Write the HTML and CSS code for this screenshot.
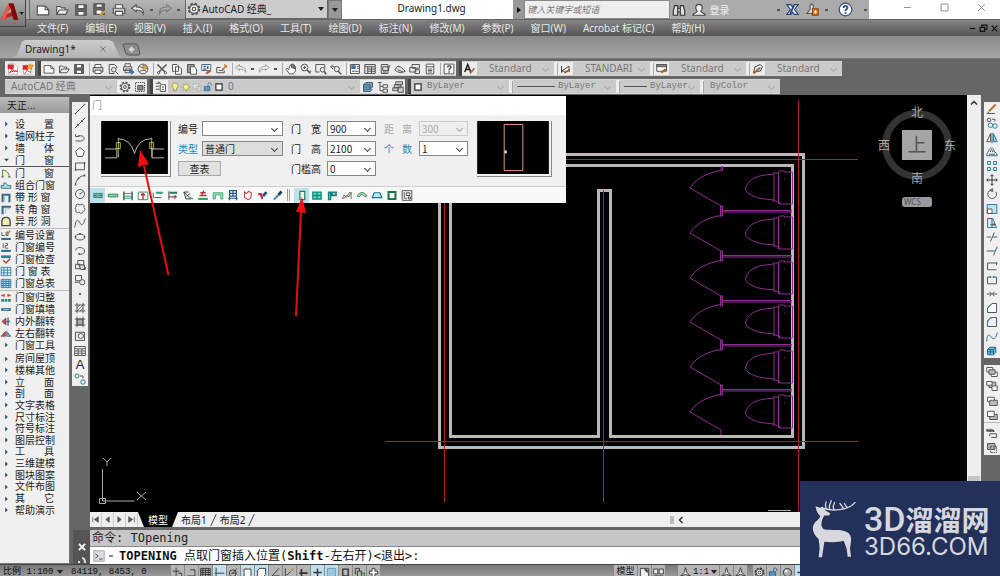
FILE: index.html
```html
<!DOCTYPE html>
<html lang="zh-CN">
<head>
<meta charset="utf-8">
<meta name="viewport" content="width=device-width, initial-scale=1">
<title>Drawing1.dwg</title>
<link rel="stylesheet" href="styles.css">
</head>
<body>
<svg class="sprite" aria-hidden="true">
<symbol id="new" viewBox="0 0 16 16"><path fill="#fff" d="M1.500 3.500h9l4 4v6h-13z"/><path d="M10.500 3.500v4h4"/></symbol>
<symbol id="open" viewBox="0 0 16 16"><path fill="#eee" d="M2 13V4h4l1.500 1.500h4V8M2 13l3-5h10l-3 5z"/></symbol>
<symbol id="save" viewBox="0 0 16 16"><path fill="#666" d="M2 2h12v12H2z"/><path fill="#fff" d="M4.500 2h7v4.500h-7zM4.500 9.500h7V14h-7z"/></symbol>
<symbol id="saveas" viewBox="0 0 16 16"><path fill="#666" d="M1 1h12v12H1z"/><path fill="#fff" d="M3.500 1h7v4h-7zM3.500 8h7v5h-7z"/><path stroke="#c79a2a" stroke-width="2.500" d="M8 14l6-5"/></symbol>
<symbol id="print" viewBox="0 0 16 16"><path fill="#fff" d="M4 6V2h8v4"/><path fill="#ccc" d="M1.500 6h13v6h-13z"/><path fill="#fff" d="M4 9.500h8V14H4z"/></symbol>
<symbol id="preview" viewBox="0 0 16 16"><path d="M10 14H3V2h7l3 3v2"/><circle cx="9" cy="9" r="3"/><path d="M11 11l4 4"/></symbol>
<symbol id="publish" viewBox="0 0 16 16"><path d="M4 5V1h7v4M2 5h11v5H2zM4 8h8v5H4z"/><path fill="#3f79ad" stroke="#3f79ad" d="M10 11h3V9l3 3-3 3v-2h-3z"/></symbol>
<symbol id="globe" viewBox="0 0 16 16"><circle cx="8" cy="8" r="6.500" fill="#eee"/><path d="M3 4c3 3 7 3 10 0M3 12c2-3 8-3 10 0"/><path fill="#e3b75c" stroke="#a87d2c" d="M8 8V3c4 0 5 3 5 5z"/></symbol>
<symbol id="undo" viewBox="0 0 16 16"><path fill="#eee" d="M1 6l5-4v2.500c6 0 9 3 8 8-1-3-3.500-4.500-8-4.500V10z"/></symbol>
<symbol id="redo" viewBox="0 0 16 16"><path d="M15 6l-5-4v2.500c-6 0-9 3-8 8 1-3 3.500-4.500 8-4.500V10z"/></symbol>
<symbol id="cut" viewBox="0 0 16 16"><path stroke-width="2" d="M2 2l10 10M14 2L4 12"/><circle cx="3.500" cy="13" r="1.500"/><circle cx="12.500" cy="13" r="1.500"/></symbol>
<symbol id="copy" viewBox="0 0 16 16"><path fill="#fff" d="M2 2h6l2 2v7H2zM6 5h5l3 3v7H6z"/></symbol>
<symbol id="paste" viewBox="0 0 16 16"><path fill="#999" d="M2 2h9v11H2z"/><path fill="#fff" d="M6 5h5l3 3v7H6z"/></symbol>
<symbol id="match" viewBox="0 0 16 16"><path fill="#fff" stroke="#476787" d="M1 2h12v8H1z"/><path stroke="#476787" stroke-width="2" d="M3 4.500h4M9 4v4M3 8h4"/><path stroke="#ae6b32" stroke-width="3" d="M7 14l6-4"/></symbol>
<symbol id="block" viewBox="0 0 16 16"><path d="M6 6H1v7h10v-3M4 10h5V7"/><path stroke="#c47b23" stroke-width="2" d="M9 9l5-6M11 2l4 4"/></symbol>
<symbol id="hand" viewBox="0 0 16 16"><path fill="#fff" d="M5 9L3 7 1.500 8.500 6 14.500h5.500L14 10V5l-1.500-1V8 3L11 2v5-5.500H9V7 2L7 2.500z"/></symbol>
<symbol id="zoomrt" viewBox="0 0 16 16"><circle cx="6" cy="6" r="4.500"/><path stroke-width="2" d="M9 9l5 5"/><path d="M4 6h4M6 4v4M11 11h4"/></symbol>
<symbol id="zoomwin" viewBox="0 0 16 16"><path d="M6 12H1V2h12v5"/><circle cx="10" cy="9" r="3"/><path stroke-width="2" d="M12 11l3 4"/></symbol>
<symbol id="zoomprev" viewBox="0 0 16 16"><circle cx="9" cy="8" r="3.500"/><path stroke-width="2" d="M11 11l4 4"/><path d="M1 5h6M1 5l3-3M1 5l3 3"/></symbol>
<symbol id="props" viewBox="0 0 16 16"><path fill="#fff" d="M2 2h12v12H2z"/><path fill="#3f719b" stroke="none" d="M3 3h6v5H3z"/><path d="M10.500 4.500h3M10.500 7h3M4 11h9"/></symbol>
<symbol id="dc" viewBox="0 0 16 16"><path fill="#ddd" d="M1 2h14v12H1zM1 5h14M5 5v9M5 8h10M5 11h10M10 5v9"/></symbol>
<symbol id="palette" viewBox="0 0 16 16"><path fill="#ddd" d="M3 2h9v12H3zM5 5h8v5H5z"/><path d="M12 8l3-5M5 12h5"/></symbol>
<symbol id="sheet" viewBox="0 0 16 16"><path fill="#ddd" d="M1 9l4-5 5 2 5 5-5 2-5-1zM5 9l7 3"/></symbol>
<symbol id="markup" viewBox="0 0 16 16"><path d="M4 2h10v5H4zM1 6h8v6H1zM8 9h6v5H8z"/></symbol>
<symbol id="calc" viewBox="0 0 16 16"><path fill="#fff" d="M3 1.500h10v13H3zM3 5h10M5 8h6M5 10h6M5 12h6"/></symbol>
<symbol id="helpbox" viewBox="0 0 16 16"><path fill="#fff" d="M1.500 1.500h13v13h-13z"/><path stroke-width="2" d="M6 6c0-3 4.500-3 4.500-.5C10.500 7.500 8 7 8 9.500M8 11v2"/></symbol>
<symbol id="gear" viewBox="0 0 16 16"><circle cx="8" cy="8" r="6" stroke-width="2.500" stroke-dasharray="2.700 2"/><circle cx="8" cy="8" r="5" fill="#eee"/><circle cx="8" cy="8" r="2"/></symbol>
<symbol id="wsave" viewBox="0 0 16 16"><path stroke-dasharray="2 1" d="M2 2h12v12H2z"/><path fill="#888" d="M5 6h7v6H5z"/></symbol>
<symbol id="layers" viewBox="0 0 16 16"><path fill="#fff" d="M7 5h7v9H7zM1 3h7M1 7h5M1 11h5M9 8h3M9 11h3M4 1l3 2"/></symbol>
<symbol id="bulb" viewBox="0 0 16 16"><path fill="#f7ec8b" stroke="#7d783b" d="M6 11C1 6 4 1.500 8 1.500S15 6 10 11v3H6z"/></symbol>
<symbol id="sun" viewBox="0 0 16 16"><path stroke="#a99647" d="M8 0v16M0 8h16M2 2l12 12M14 2L2 14"/><circle cx="8" cy="8" r="4" fill="#fff7a0" stroke="#a99647"/></symbol>
<symbol id="vp" viewBox="0 0 16 16"><path stroke="#aaa" fill="#ddd" d="M2 3h9v8H2zM7 7h7v7H7z"/></symbol>
<symbol id="lock" viewBox="0 0 16 16"><path fill="#5b93bd" stroke="#34627e" d="M2 7h9v7H2z"/><path stroke="#34627e" d="M8 7V3c0-2 5-2 5 0v3"/></symbol>
<symbol id="box" viewBox="0 0 16 16"><path fill="#fff" stroke="#333" stroke-width="2" d="M3 3h10v10H3z"/></symbol>
<symbol id="stack" viewBox="0 0 16 16"><path fill="#82a9bd" stroke="#355f75" d="M5 2h9v6l-3 3H2V5zM2 5h9v6M2 8h9M2 11v3h9l3-3"/></symbol>
<symbol id="tree" viewBox="0 0 16 16"><path d="M1 2h5M4 2v11h4M4 7h4M8 5h6v4H8zM8 11h6v4H8z"/></symbol>
<symbol id="lstate" viewBox="0 0 16 16"><path fill="#ccc" d="M5 1h9v4H5zM3 5h9v4H3zM1 9h7v4H1zM8 8h7v7H8z"/></symbol>
<symbol id="tstyle" viewBox="0 0 16 16"><path stroke="#222" stroke-width="2" d="M1 12L5 2l4 10M2.500 8.500h5"/><path stroke="#a66d46" stroke-width="2.500" d="M8 14l6-7"/></symbol>
<symbol id="dstyle" viewBox="0 0 16 16"><path stroke="#444" d="M2 4v9M2 11l10-7v8M2 11h4"/><path stroke="#a4522e" stroke-width="2.500" d="M6 13l7-4"/></symbol>
<symbol id="tbstyle" viewBox="0 0 16 16"><path fill="#fff" d="M1 2h13v9H1z"/><path fill="#888" d="M1 2h13v3H1z"/><path stroke="#96683c" stroke-width="3" d="M7 13l6-5"/></symbol>
<symbol id="mstyle" viewBox="0 0 16 16"><path fill="#eee" stroke="#444" d="M2 13l2-8 7-3 3 3-3 6H6z"/><path stroke="#9c6a3d" stroke-width="2.500" d="M2 14l9-8"/></symbol>
<symbol id="pdf" viewBox="0 0 16 16"><path fill="#fff" stroke="#bbb" d="M2 1h8l4 4v10H2z"/><path fill="#d8262c" stroke="none" d="M1 2h8v6H1z"/><path stroke="#d8262c" d="M3 13c4-3 4-6 3-7-1 3 4 6 8 5-4-1-7 0-11 2"/></symbol>
<symbol id="pdfm" viewBox="0 0 16 16"><path fill="#fff" stroke="#bbb" d="M2 3h10v12H2z"/><path fill="#d8262c" stroke="none" d="M1 3h7v6H1z"/><path stroke="#d8262c" d="M3 14c4-2 4-5 3-6 1 3 4 4 6 4"/><path fill="#f3b22b" stroke="#d88b12" d="M11 1l1 2 3 0-2 3 0 3-3-2-3 0 2-3z"/></symbol>
<symbol id="binoc" viewBox="0 0 16 16"><path fill="#ddd" stroke="#333" d="M3 3h3.500v11h-5V9zM13 3H9.500v11h5V9zM6.500 6h3v4h-3z"/></symbol>
<symbol id="person" viewBox="0 0 16 16"><path fill="#eee" stroke="#444" d="M1 14c0-3 5-2.500 5-4.500C3 6 4 1.500 8 1.500S13 6 10 9.500c0 2 5 1.500 5 4.500z"/></symbol>
<symbol id="xchg" viewBox="0 0 16 16"><path fill="#e9f0fa" stroke="#24427d" d="M1 2h5l2 3 2-3h5l-4.500 6L15 14h-5l-2-3-2 3H1l4.500-6z"/><path stroke="#24427d" stroke-width="2" d="M10 3L5 13"/></symbol>
<symbol id="cloud" viewBox="0 0 16 16"><path fill="#ddd" stroke="#555" d="M1 13l4-5V3l2-2 2 2v5l4 5z"/><path fill="#e07d1e" stroke="#8d3b0c" d="M8 7h7v8H8z"/><path stroke="#fff" d="M11.500 9v4M9.500 11h4"/></symbol>
<symbol id="help" viewBox="0 0 16 16"><circle cx="8" cy="8" r="6.700" fill="#fff" stroke="#345083"/><path stroke="#345083" stroke-width="2" d="M6 6.500c0-3 4-3 4-.5C10 8 8 7.500 8 9.500M8 11v1.800"/></symbol>
<symbol id="min" viewBox="0 0 16 16"><path d="M3 8h10"/></symbol>
<symbol id="max" viewBox="0 0 16 16"><path d="M3 3h10v10H3z"/></symbol>
<symbol id="x" viewBox="0 0 16 16"><path d="M3 3l10 10M13 3L3 13"/></symbol>
<symbol id="restore" viewBox="0 0 16 16"><path d="M5 6V2h9v7h-4M2 6h8v7H2z"/></symbol>
<symbol id="plus" viewBox="0 0 20 14"><path fill="#8d8d8d" stroke="#4f4f4f" d="M1 2q0-1 1-1h12q2 0 3 2l2 8q0 2-2 2H7q-2 0-3-2z"/><path stroke="#ddd" stroke-width="2" d="M10 4v6M7 7h6"/></symbol>
<symbol id="line" viewBox="0 0 16 16"><path d="M2 14L14 2"/><path stroke-width="2.500" d="M1.500 14.500l1-1M13.500 2.500l1-1"/></symbol>
<symbol id="xline" viewBox="0 0 16 16"><path d="M1 15L15 1"/><path stroke-width="3" d="M5 11l1-1M10 6l1-1"/></symbol>
<symbol id="pline" viewBox="0 0 16 16"><path d="M2 12h7c6 0 6-7 0-7H5M2 3v3h5"/></symbol>
<symbol id="poly" viewBox="0 0 16 16"><path d="M8 2l6 5-2.500 7h-7L2 7z"/></symbol>
<symbol id="rect" viewBox="0 0 16 16"><path d="M2 4h12v9H2z"/><path stroke-width="2.500" d="M1 13h2M13 4h2"/></symbol>
<symbol id="arc" viewBox="0 0 16 16"><path d="M2 14C3 8 7 3 14 2"/><path stroke-width="2.500" d="M1 14h2M5 6h2M13 2h2"/></symbol>
<symbol id="circle" viewBox="0 0 16 16"><circle cx="8" cy="8" r="6"/><path d="M8 8l4-3M7 8h2"/></symbol>
<symbol id="revcloud" viewBox="0 0 16 16"><path d="M3 5c-2-3 3-5 5-2 3-3 7 0 5 3 3 2 1 5-1 5 0 3-4 4-5 1-3 2-6 0-4-3-2-1-2-3 0-4z"/></symbol>
<symbol id="spline" viewBox="0 0 16 16"><path d="M1 14C3 0 6 4 8 8s4 4 7-6"/></symbol>
<symbol id="ellipse" viewBox="0 0 16 16"><ellipse cx="8" cy="8" rx="6" ry="4"/><path stroke-width="2.500" d="M1 8h2M13 8h2M7 4h2"/></symbol>
<symbol id="earc" viewBox="0 0 16 16"><path d="M2 7c1-5 12-5 12 1 0 4-4 5-7 4"/><path stroke-width="2.500" d="M6 12h2"/></symbol>
<symbol id="insert" viewBox="0 0 16 16"><path d="M5 2h8v6H5zM2 7h6v6H2z"/><path fill="#ddd" d="M7 8h7v6H9z"/><path fill="#333" d="M12 14l3-3v3z"/></symbol>
<symbol id="mkblock" viewBox="0 0 16 16"><path d="M2 2h8v7H2zM1 11h6"/><circle cx="11" cy="11" r="3.500" fill="#eee"/></symbol>
<symbol id="point" viewBox="0 0 16 16"><circle cx="8" cy="8" r="1" fill="#555"/></symbol>
<symbol id="hatch" viewBox="0 0 16 16"><path d="M4 1v14M12 1v14M1 4h14M1 12h14"/><path stroke-width=".8" d="M4 8l4-4M4 12l8-8M8 12l4-4"/></symbol>
<symbol id="grad" viewBox="0 0 16 16"><path fill="#aaa" d="M4 4h8v8H4z"/><path d="M4 1v14M12 1v14M1 4h14M1 12h14"/></symbol>
<symbol id="region" viewBox="0 0 16 16"><path d="M2 3h12v11H2z"/><circle cx="9" cy="8" r="3.500"/></symbol>
<symbol id="table" viewBox="0 0 16 16"><path fill="#fff" d="M1 2h14v12H1zM1 5h14M1 8h14M1 11h14M5.500 5v9M10.500 5v9"/></symbol>
<symbol id="addsel" viewBox="0 0 16 16"><circle cx="4" cy="4" r="2.700" stroke="#3a8340"/><circle cx="12" cy="12" r="3" fill="#dcedf5" stroke="#347495"/><path d="M8 4h4v3"/></symbol>
<symbol id="erase" viewBox="0 0 16 16"><path stroke="#b6793a" stroke-width="3" d="M4 11l9-9"/><path d="M1 14h11M2 12l3 2"/></symbol>
<symbol id="copyo" viewBox="0 0 16 16"><circle cx="4" cy="4" r="2.500"/><g stroke="#2d7fa4"><circle cx="6" cy="11" r="3"/><circle cx="12" cy="12" r="3"/></g><path d="M8 3h4v3"/></symbol>
<symbol id="mirror" viewBox="0 0 16 16"><path d="M6 2v11H1zM8 1v14"/><path fill="#9fc9dc" stroke="#2d7fa4" d="M10 2v11h5z"/></symbol>
<symbol id="offset" viewBox="0 0 16 16"><path stroke="#2d6f91" d="M1 13h14c0-4-3-5-4-5 0-7-7-7-8 0-1 1-2 2-2 5z"/><path d="M4 11h8M6 8c0-4 3-4 3 0"/></symbol>
<symbol id="array" viewBox="0 0 16 16"><g fill="#d9eef7" stroke="#2d7fa4"><path d="M2 2h4v4H2zM10 2h4v4h-4zM2 10h4v4H2zM10 10h4v4h-4z"/></g></symbol>
<symbol id="move" viewBox="0 0 16 16"><path stroke="#333" d="M8 1v14M1 8h14M6 3l2-2 2 2M6 13l2 2 2-2M3 6L1 8l2 2M13 6l2 2-2 2"/></symbol>
<symbol id="rotate" viewBox="0 0 16 16"><path d="M9 2.500A5.800 5.800 0 1 0 13 5M9 1v4l-4-2z"/></symbol>
<symbol id="scale" viewBox="0 0 16 16"><path fill="#c3e1ef" stroke="#2d7fa4" d="M1.500 2h13v12h-13z"/><path fill="#fff" d="M2 8h6v6H2z"/></symbol>
<symbol id="stretch" viewBox="0 0 16 16"><path fill="#d3ecf5" stroke="#2d7fa4" d="M2 2h7l5 12H2z"/><path d="M2 2h6v12M6 10h6M10 8l2 2-2 2"/></symbol>
<symbol id="trim" viewBox="0 0 16 16"><path d="M1 8h4M11 8h4M6 14l5-12" /><path stroke="#2d7fa4" d="M5 8h2M9 8h2"/></symbol>
<symbol id="extend" viewBox="0 0 16 16"><path d="M1 8h8M10 14l5-12"/><path stroke="#2d7fa4" d="M8 8h4"/></symbol>
<symbol id="brkpt" viewBox="0 0 16 16"><path d="M2 13V4h12v3M2 13h12"/><path stroke="#2d7fa4" stroke-width="2.500" d="M13 4h2"/></symbol>
<symbol id="brk" viewBox="0 0 16 16"><path d="M6 4H2v9h12V4h-4"/><path stroke="#2d7fa4" stroke-width="2.500" d="M5 4h2M9 4h2"/></symbol>
<symbol id="join" viewBox="0 0 16 16"><path d="M1 8h14M5 5l2 3-2 3M11 5L9 8l2 3"/></symbol>
<symbol id="chamfer" viewBox="0 0 16 16"><path fill="#f5fafc" d="M2 14V8l6-6h6v12z"/><path stroke="#2d7fa4" d="M2 8l6-6"/></symbol>
<symbol id="fillet" viewBox="0 0 16 16"><path fill="#e7f3f8" d="M2 14v-4c0-5 3-8 8-8h4v12z"/><path stroke="#2d7fa4" d="M2 10c0-5 3-8 8-8"/></symbol>
<symbol id="blend" viewBox="0 0 16 16"><path stroke="#2d6f91" d="M1 14C1 4 4 4 7 8s6 3 8-6"/></symbol>
<symbol id="explode" viewBox="0 0 16 16"><path fill="#6fb4cf" stroke="#22708f" d="M5 3h8v7l-3 3H2V6zM2 6h8v7M10 6l3-3M6 6v7M2 9h8"/></symbol>
<symbol id="front" viewBox="0 0 16 16"><path fill="#fff" d="M1 2h8v6H1zM7 8h8v6H7z"/><path fill="#bbb" d="M4 5h8v6H4z"/></symbol>
<symbol id="back" viewBox="0 0 16 16"><path fill="#bbb" d="M4 3h9v7H4z"/><path fill="#fff" d="M1 2h7v5H1zM8 8h7v6H8z"/></symbol>
<symbol id="above" viewBox="0 0 16 16"><path fill="#fff" d="M2 3h9v6H2z"/><path fill="#bbb" d="M5 7h10v7H5z"/></symbol>
<symbol id="under" viewBox="0 0 16 16"><path fill="#bbb" d="M5 7h10v7H5z"/><path fill="#fff" d="M2 3h9v7H2z"/></symbol>
<symbol id="abc" viewBox="0 0 16 16"><path d="M1 6V3h2v3M5 3v3h2V3zM9 3v3h2M5 9h9v5H7M5 9v3"/><path stroke-width="2" d="M1 5h10"/></symbol>
<symbol id="hback" viewBox="0 0 16 16"><path fill="#aaa" d="M2 2h10v8H2z"/><path stroke-dasharray="2 1" d="M6 6h8v8H6z"/></symbol>
<symbol id="tri" viewBox="0 0 8 8"><path fill="#174f69" stroke="none" d="M2 0l4 4-4 4z"/></symbol>
<symbol id="trid" viewBox="0 0 8 8"><path fill="#174f69" stroke="none" d="M0 2h8L4 6z"/></symbol>
<symbol id="d1" viewBox="0 0 16 16"><path fill="#efeebd" stroke="#487a58" d="M3 13V3c6 0 9 4 10 10"/><path stroke="#305f63" d="M1 13h4M11 13h4"/></symbol>
<symbol id="d2" viewBox="0 0 16 16"><path fill="#b6dde4" stroke="#326878" d="M1 12V8h4V4c3 0 5 2 5 4h5v4z"/></symbol>
<symbol id="d3" viewBox="0 0 16 16"><path stroke="#356b7c" stroke-width="3" d="M3 15V4h10v11"/><path stroke="#9bc" d="M6 5v9"/></symbol>
<symbol id="d4" viewBox="0 0 16 16"><path stroke="#356b7c" stroke-width="3" d="M3 15V4h12"/><path stroke="#9bc" d="M7 14V7h7"/></symbol>
<symbol id="d5" viewBox="0 0 16 16"><path fill="#f3efb4" stroke="#444" stroke-width="2" d="M2 14V8c0-8 12-8 12 0v6z"/></symbol>
<symbol id="d6" viewBox="0 0 16 16"><path d="M2 3v5h4M8 3v5h3V3z"/><path stroke="#a88444" stroke-width="2" d="M9 7l5-6"/><path stroke="#2d6f91" stroke-width="3" d="M1 13h14"/></symbol>
<symbol id="d7" viewBox="0 0 16 16"><path d="M4 2v7M7 2h3v3H7v4h4"/><path stroke="#2d6f91" stroke-width="3" d="M1 13h14"/></symbol>
<symbol id="d8" viewBox="0 0 16 16"><path stroke="#2d7f8f" stroke-width="4" d="M1 4h14"/><path stroke="#c4363b" stroke-width="2" d="M4 9l4 4 6-6"/></symbol>
<symbol id="d9" viewBox="0 0 16 16"><path fill="#e2f2fa" stroke="#2d7fa4" d="M1 2h14v12H1zM1 6h14M1 10h14M5 2v12M10 2v12"/></symbol>
<symbol id="d10" viewBox="0 0 16 16"><path fill="#b9dcec" stroke="#2d7fa4" d="M1 2h14v12H1zM1 5h14M1 8h14M1 11h14M4 2v12M8 2v12M12 2v12"/></symbol>
<symbol id="d11" viewBox="0 0 16 16"><path stroke="#bf4a3f" stroke-width="2" d="M1 5h5M10 5h5M5 3v4M11 3v4"/><path stroke="#37857c" stroke-width="4" stroke-dasharray="4 1" d="M1 12h14"/></symbol>
<symbol id="d12" viewBox="0 0 16 16"><path stroke="#2d6f91" stroke-width="4" d="M1 8h14"/><path stroke="#9ccbe0" d="M4 8h8"/></symbol>
<symbol id="d13" viewBox="0 0 16 16"><path fill="#bc4b55" stroke="#944" d="M2 8l6-5v10z"/><path stroke="#47778c" stroke-width="2" d="M11 2v12M8 8h6"/></symbol>
<symbol id="d14" viewBox="0 0 16 16"><path fill="#bc4b55" stroke="#944" d="M1 12l6-7v7z"/><path fill="#7ea7b8" stroke="#47778c" d="M9 12V5l6 7z"/></symbol>
<symbol id="t1" viewBox="0 0 16 16"><path stroke="#178965" stroke-width="3" d="M1 8h5M10 8h5"/><path stroke="#178965" d="M1 5h14M1 11h14M6 6l4 4M10 6l-4 4"/></symbol>
<symbol id="t2" viewBox="0 0 16 16"><path fill="#84d4a5" stroke="#258562" d="M1 6h14v4H1z"/></symbol>
<symbol id="t3" viewBox="0 0 16 16"><path stroke="#365f4b" stroke-width="2" d="M2 2v13M14 2v13"/><path stroke="#328564" d="M2 5h12M2 9h12v3H2"/></symbol>
<symbol id="t4" viewBox="0 0 16 16"><path stroke="#328564" d="M1 3h14v11H1z"/><path stroke="#b8343a" stroke-width="2" d="M8 14V6M5 8l3-3 3 3"/></symbol>
<symbol id="t5" viewBox="0 0 16 16"><path stroke="#2ca46b" stroke-width="3" d="M5 4h10"/><path stroke="#394c44" d="M1 4v8M3 11h10"/></symbol>
<symbol id="t6" viewBox="0 0 16 16"><path stroke="#26805a" stroke-width="3" d="M3 4h11"/><path stroke="#333" d="M2 2v12M2 10h10M10 7l3 3-3 3"/><path stroke="#b8343a" d="M7 10h5"/></symbol>
<symbol id="t7" viewBox="0 0 16 16"><path stroke="#333" d="M2 3h7M2 3l10 10H5zM6 9l5-4"/><path stroke="#299765" stroke-width="2" d="M10 11l5 2"/></symbol>
<symbol id="t8" viewBox="0 0 16 16"><path stroke="#b8343a" stroke-width="2" d="M4 4h8M3 8h10M9 1l-3 8"/><path stroke="#2ca46b" stroke-width="3" d="M1 13h14"/></symbol>
<symbol id="t9" viewBox="0 0 16 16"><path fill="#a4e5bc" stroke="#37a66c" d="M1 13V4h14v9h-3V7H4v6z"/></symbol>
<symbol id="t10" viewBox="0 0 16 16"><path stroke="#21557e" stroke-width="1.700" d="M3 1h10v8H3zM8 1v8M3 5h10M1 12h14M3 10v5M13 10v5"/></symbol>
<symbol id="t11" viewBox="0 0 16 16"><path stroke="#b94d4c" stroke-width="1.600" d="M3 3l3 2 3-3 4 2-1 8-4 2-5-3z"/></symbol>
<symbol id="t12" viewBox="0 0 16 16"><path stroke="#254f77" stroke-width="4" d="M8 9l5-6"/><path stroke="#b8343a" stroke-width="3" d="M1 6h4l2 7"/></symbol>
<symbol id="t13" viewBox="0 0 16 16"><path stroke="#4689ad" stroke-width="3" d="M2 14l7-7"/><path stroke="#173c68" stroke-width="4" d="M9 7l4-5"/></symbol>
<symbol id="t14" viewBox="0 0 16 16"><path fill="#eafff2" stroke="#247a5c" stroke-width="1.700" d="M5 2h7v12H5z"/></symbol>
<symbol id="t15" viewBox="0 0 16 16"><path fill="#61dfdc" stroke="#128c77" stroke-width="2" d="M2 3h12v10H2zM8 3v10M2 8h12"/></symbol>
<symbol id="t16" viewBox="0 0 16 16"><path fill="#6fd4cd" stroke="#167d76" stroke-width="2" d="M8 3h6v5H8zM3 14V3h3v11z"/></symbol>
<symbol id="t17" viewBox="0 0 16 16"><path stroke="#b8343a" d="M1 13l3-6 3 4 5-8"/><path stroke="#32845f" d="M3 13l4-5 4 2 3-7v10"/></symbol>
<symbol id="t18" viewBox="0 0 16 16"><path fill="#a6d9bb" stroke="#39835b" d="M1 9c3-7 11-7 14 0l-3 1c-2-4-6-4-8 0z"/></symbol>
<symbol id="t19" viewBox="0 0 16 16"><path fill="#baf1e5" stroke="#20739b" stroke-width="1.800" d="M4 4h8l3 7H1z"/></symbol>
<symbol id="t20" viewBox="0 0 16 16"><path fill="#fff" stroke="#187a48" stroke-width="3" d="M3 3h10v10H3z"/></symbol>
<symbol id="t21" viewBox="0 0 16 16"><path stroke="#444" d="M1 1h14v14H1zM4 3v9h4M7 4h5v4H7zM10 10h3v3h-3z"/></symbol>
<symbol id="s1" viewBox="0 0 16 16"><path d="M6 1v12M1 6h10M9 9h5v4"/></symbol>
<symbol id="s2" viewBox="0 0 16 16"><path d="M2 13h11V4H6"/></symbol>
<symbol id="s3" viewBox="0 0 16 16"><path d="M1 2h14v12H1zM1 5h14M1 8h14M1 11h14M4 2v12M8 2v12M12 2v12"/></symbol>
<symbol id="s4" viewBox="0 0 16 16"><path d="M3 1v13M1 9h14"/></symbol>
<symbol id="s5" viewBox="0 0 16 16"><circle cx="7" cy="9" r="5"/><path d="M7 9l6-7M5 9h7"/></symbol>
<symbol id="s6" viewBox="0 0 16 16"><path fill="#fff" d="M3 3h10v12H3z"/><path stroke="#c28541" stroke-width="2" d="M1 4h3"/></symbol>
<symbol id="s7" viewBox="0 0 16 16"><path fill="#fff" d="M2 5l3-3h9v9l-3 3H2z"/></symbol>
<symbol id="s8" viewBox="0 0 16 16"><path d="M13 2L3 13h11"/></symbol>
<symbol id="s9" viewBox="0 0 16 16"><path d="M2 2v12h12M4 12l9-9"/><path stroke="#c28541" stroke-width="2" d="M9 7l5-5"/></symbol>
<symbol id="s10" viewBox="0 0 16 16"><path stroke-width="2.500" d="M5 3v10M2 9h12"/></symbol>
<symbol id="s11" viewBox="0 0 16 16"><path stroke-width="2" d="M8 2v12M2 8h12"/></symbol>
<symbol id="s12" viewBox="0 0 16 16"><path stroke="#4581aa" fill="#9dc7e0" stroke-dasharray="2 1" d="M2 2h12v12H2z"/></symbol>
<symbol id="s13" viewBox="0 0 16 16"><path stroke-width="2" d="M4 3h8v10H4z"/></symbol>
<symbol id="s14" viewBox="0 0 16 16"><path d="M2 11V2h6v4M5 6h6v8H5z"/><path stroke="#478d4e" stroke-width="2" d="M9 9h6v5"/></symbol>
<symbol id="s15" viewBox="0 0 16 16"><path fill="#fff" d="M6 2h4v4h4v4h-4v4H6v-4H2V6h4z"/></symbol>
<symbol id="lay1" viewBox="0 0 16 16"><path fill="#eee" d="M2 2h12v12H2z"/><path fill="#555" d="M8 4h4v4z"/></symbol>
<symbol id="lay2" viewBox="0 0 16 16"><path fill="#eee" d="M1 3h6v7H1zM9 3h6v7H9zM1 13h14"/></symbol>
<symbol id="ann" viewBox="0 0 16 16"><path fill="#ddd" d="M8 1l2 7 5 5-7-2-7 2 5-5z"/></symbol>
<symbol id="ball" viewBox="0 0 16 16"><circle cx="8" cy="8" r="6" fill="#aaa"/><circle cx="6" cy="6" r="2" fill="#eee" stroke="none"/></symbol>
<symbol id="first" viewBox="0 0 16 16"><path fill="#555" d="M3 3v10M13 3L6 8l7 5z"/></symbol>
<symbol id="prev" viewBox="0 0 16 16"><path fill="#555" d="M11 3L5 8l6 5z"/></symbol>
<symbol id="next" viewBox="0 0 16 16"><path fill="#555" d="M5 3l6 5-6 5z"/></symbol>
<symbol id="last" viewBox="0 0 16 16"><path fill="#555" d="M13 3v10M3 3l7 5-7 5z"/></symbol>
<symbol id="prompt" viewBox="0 0 16 16"><path fill="#ddd" stroke="#aaa" d="M1 1h14v14H1z"/><path stroke="#557" d="M3 5l4 3-4 3M8 12h5"/></symbol>
</svg>

<header class="head">
  <button class="logo" aria-label="应用程序菜单"><svg class="logo-a" viewBox="0 0 26 26"><path fill="#c01f1a" d="M1 20L9 3h5l5 17h-5l-1-4-6 2-2 2z"/><path fill="#7c0c0c" d="M9 3h5l5 17h-5z"/><path fill="#eb5a48" d="M1 20L9 3l1 5-5 12z"/><path fill="#aaa" d="M7 14l5-2-1-4z"/><path fill="#222" d="M20 12h5l-2.500 3z"/></svg></button>
  <div class="title">
    <div class="quick">
      <button class="qb" aria-label="新建"><svg class="ic"><use href="#new"/></svg></button><button class="qb" aria-label="打开"><svg class="ic"><use href="#open"/></svg></button><button class="qb" aria-label="保存"><svg class="ic"><use href="#save"/></svg></button><button class="qb" aria-label="另存为"><svg class="ic"><use href="#saveas"/></svg></button><button class="qb" aria-label="打印"><svg class="ic"><use href="#print"/></svg></button><button class="qb" aria-label="放弃"><svg class="ic"><use href="#undo"/></svg></button><i class="dot"></i><button class="qb dim" aria-label="重做"><svg class="ic"><use href="#redo"/></svg></button><i class="dot"></i>
    </div>
    <div class="workspace"><svg class="ic"><use href="#gear"/></svg><select class="sel" aria-label="工作空间"><option>AutoCAD 经典_</option></select><i class="down"></i></div>
    <button class="more" aria-label="自定义"><i class="down"></i></button>
    <h1 class="doc">Drawing1.dwg</h1>
    <div class="search"><button class="side" aria-label="展开"></button><input class="query" type="search" aria-label="搜索" placeholder="键入关键字或短语"></div>
    <div class="account"><button class="qb" aria-label="查找"><svg class="ic"><use href="#binoc"/></svg></button><button class="qb login"><svg class="ic"><use href="#person"/></svg>登录</button></div>
    <div class="services"><i class="dot"></i><button class="qb" aria-label="Exchange"><svg class="ic"><use href="#xchg"/></svg></button><button class="qb" aria-label="连接"><svg class="ic"><use href="#cloud"/></svg></button><i class="dot"></i><button class="qb helpb" aria-label="帮助"><svg class="ic"><use href="#help"/></svg></button><i class="dot"></i></div>
    <div class="win"><button class="wb" aria-label="最小化"><svg class="ic"><use href="#min"/></svg></button><button class="wb" aria-label="最大化"><svg class="ic"><use href="#max"/></svg></button><button class="wb" aria-label="关闭"><svg class="ic"><use href="#x"/></svg></button></div>
  </div>
  <nav class="menu">
    <button class="mi">文件(F)</button><button class="mi">编辑(E)</button><button class="mi">视图(V)</button><button class="mi">插入(I)</button><button class="mi">格式(O)</button><button class="mi">工具(T)</button><button class="mi">绘图(D)</button><button class="mi">标注(N)</button><button class="mi">修改(M)</button><button class="mi">参数(P)</button><button class="mi">窗口(W)</button><button class="mi">Acrobat 标记(C)</button><button class="mi">帮助(H)</button>
    <span class="mdi"><button class="db" aria-label="最小化文档"><svg class="ic"><use href="#min"/></svg></button><button class="db" aria-label="还原文档"><svg class="ic"><use href="#restore"/></svg></button><button class="db" aria-label="关闭文档"><svg class="ic"><use href="#x"/></svg></button></span>
  </nav>
</header>

<div class="files">
  <div class="file"><span>Drawing1*</span><button class="close" aria-label="关闭"><svg class="ic"><use href="#x"/></svg></button></div>
  <button class="add" aria-label="新图形"><svg class="plus"><use href="#plus"/></svg></button>
</div>

<div class="bars">
  <div class="bar">
    <div class="grp"><button class="tb" aria-label="PDF"><svg class="ic"><use href="#pdf"/></svg></button><button class="tb" aria-label="PDF 设置"><svg class="ic"><use href="#pdfm"/></svg></button></div>
    <div class="grp">
      <button class="tb" aria-label="新建"><svg class="ic"><use href="#new"/></svg></button><button class="tb" aria-label="打开"><svg class="ic"><use href="#open"/></svg></button><button class="tb" aria-label="保存"><svg class="ic"><use href="#save"/></svg></button><i class="sep"></i><button class="tb" aria-label="打印"><svg class="ic"><use href="#print"/></svg></button><button class="tb" aria-label="预览"><svg class="ic"><use href="#preview"/></svg></button><button class="tb" aria-label="发布"><svg class="ic"><use href="#publish"/></svg></button><button class="tb" aria-label="三维打印"><svg class="ic"><use href="#globe"/></svg></button><i class="sep"></i><button class="tb" aria-label="剪切"><svg class="ic"><use href="#cut"/></svg></button><button class="tb" aria-label="复制"><svg class="ic"><use href="#copy"/></svg></button><button class="tb" aria-label="粘贴"><svg class="ic"><use href="#paste"/></svg></button><button class="tb" aria-label="特性匹配"><svg class="ic"><use href="#match"/></svg></button><button class="tb" aria-label="块编辑器"><svg class="ic"><use href="#block"/></svg></button><i class="sep"></i><button class="tb dim" aria-label="放弃"><svg class="ic"><use href="#undo"/></svg></button><i class="dot"></i><button class="tb dim" aria-label="重做"><svg class="ic"><use href="#redo"/></svg></button><i class="dot"></i><i class="sep"></i><button class="tb" aria-label="平移"><svg class="ic"><use href="#hand"/></svg></button><button class="tb" aria-label="实时缩放"><svg class="ic"><use href="#zoomrt"/></svg></button><button class="tb" aria-label="窗口缩放"><svg class="ic"><use href="#zoomwin"/></svg></button><button class="tb" aria-label="上一个"><svg class="ic"><use href="#zoomprev"/></svg></button><i class="sep"></i><button class="tb" aria-label="特性"><svg class="ic"><use href="#props"/></svg></button><button class="tb" aria-label="设计中心"><svg class="ic"><use href="#dc"/></svg></button><button class="tb" aria-label="工具选项板"><svg class="ic"><use href="#palette"/></svg></button><button class="tb" aria-label="图纸集"><svg class="ic"><use href="#sheet"/></svg></button><button class="tb" aria-label="标记集"><svg class="ic"><use href="#markup"/></svg></button><button class="tb" aria-label="计算器"><svg class="ic"><use href="#calc"/></svg></button><i class="sep"></i><button class="tb" aria-label="帮助"><svg class="ic"><use href="#helpbox"/></svg></button>
    </div>
    <div class="grp styles">
      <button class="tb" aria-label="文字样式管理"><svg class="ic"><use href="#tstyle"/></svg></button><span class="drop"><select class="sel" aria-label="文字样式" disabled><option>Standard</option></select></span><i class="sep"></i>
      <button class="tb" aria-label="标注样式管理"><svg class="ic"><use href="#dstyle"/></svg></button><span class="drop"><select class="sel" aria-label="标注样式" disabled><option>STANDARI</option></select></span><i class="sep"></i>
      <button class="tb" aria-label="表格样式管理"><svg class="ic"><use href="#tbstyle"/></svg></button><span class="drop"><select class="sel" aria-label="表格样式" disabled><option>Standard</option></select></span><i class="sep"></i>
      <button class="tb" aria-label="引线样式管理"><svg class="ic"><use href="#mstyle"/></svg></button><span class="drop"><select class="sel" aria-label="引线样式" disabled><option>Standard</option></select></span>
    </div>
  </div>
  <div class="bar">
    <div class="grp ws"><span class="drop"><select class="sel" aria-label="当前工作空间" disabled><option>AutoCAD 经典</option></select></span><button class="tb" aria-label="工作空间设置"><svg class="ic"><use href="#gear"/></svg></button><button class="tb" aria-label="我的工作空间"><svg class="ic"><use href="#wsave"/></svg></button></div>
    <div class="grp layer"><button class="tb" aria-label="图层特性"><svg class="ic"><use href="#layers"/></svg></button><span class="drop"><svg class="ls"><use href="#bulb"/></svg><svg class="ls"><use href="#sun"/></svg><svg class="ls"><use href="#vp"/></svg><svg class="ls"><use href="#lock"/></svg><svg class="ls"><use href="#box"/></svg><select class="sel" aria-label="图层" disabled><option>0</option></select></span><button class="tb" aria-label="置为当前"><svg class="ic"><use href="#stack"/></svg></button><button class="tb" aria-label="上一个图层"><svg class="ic"><use href="#tree"/></svg></button><button class="tb" aria-label="图层状态"><svg class="ic"><use href="#lstate"/></svg></button></div>
    <div class="grp by">
      <span class="drop color"><svg class="ls"><use href="#box"/></svg><select class="sel" aria-label="颜色" disabled><option>ByLayer</option></select></span><i class="sep"></i>
      <span class="drop ltype"><i class="rule"></i><select class="sel" aria-label="线型" disabled><option>ByLayer</option></select></span><i class="sep"></i>
      <span class="drop lweight"><i class="rule"></i><select class="sel" aria-label="线宽" disabled><option>ByLayer</option></select></span><i class="sep"></i>
      <span class="drop plot"><select class="sel" aria-label="打印样式" disabled><option>ByColor</option></select></span>
    </div>
  </div>
</div>

<main class="work">
  <aside class="tarch">
    <h2 class="th">天正...</h2>
    <div class="tg g4"><button class="ti"><svg class="tr"><use href="#tri"/></svg><span>设 置</span></button><button class="ti"><svg class="tr"><use href="#tri"/></svg><span>轴网柱子</span></button><button class="ti"><svg class="tr"><use href="#tri"/></svg><span>墙 体</span></button><button class="ti"><svg class="tr"><use href="#trid"/></svg><span>门 窗</span></button></div>
    <div class="tg g5"><button class="ti"><svg class="ic"><use href="#d1"/></svg><span>门 窗</span></button><button class="ti"><svg class="ic"><use href="#d2"/></svg><span>组合门窗</span></button><button class="ti three"><svg class="ic"><use href="#d3"/></svg><span>带 形 窗</span></button><button class="ti three"><svg class="ic"><use href="#d4"/></svg><span>转 角 窗</span></button><button class="ti three"><svg class="ic"><use href="#d5"/></svg><span>异 形 洞</span></button></div>
    <div class="tg g5"><button class="ti"><svg class="ic"><use href="#d6"/></svg><span>编号设置</span></button><button class="ti"><svg class="ic"><use href="#d7"/></svg><span>门窗编号</span></button><button class="ti"><svg class="ic"><use href="#d8"/></svg><span>门窗检查</span></button><button class="ti three"><svg class="ic"><use href="#d9"/></svg><span>门 窗 表</span></button><button class="ti"><svg class="ic"><use href="#d10"/></svg><span>门窗总表</span></button></div>
    <div class="tg g5"><button class="ti"><svg class="ic"><use href="#d11"/></svg><span>门窗归整</span></button><button class="ti"><svg class="ic"><use href="#d12"/></svg><span>门窗填墙</span></button><button class="ti"><svg class="ic"><use href="#d13"/></svg><span>内外翻转</span></button><button class="ti"><svg class="ic"><use href="#d14"/></svg><span>左右翻转</span></button><button class="ti"><svg class="tr"><use href="#tri"/></svg><span>门窗工具</span></button></div>
    <div class="tg g14"><button class="ti"><svg class="tr"><use href="#tri"/></svg><span>房间屋顶</span></button><button class="ti"><svg class="tr"><use href="#tri"/></svg><span>楼梯其他</span></button><button class="ti"><svg class="tr"><use href="#tri"/></svg><span>立 面</span></button><button class="ti"><svg class="tr"><use href="#tri"/></svg><span>剖 面</span></button><button class="ti"><svg class="tr"><use href="#tri"/></svg><span>文字表格</span></button><button class="ti"><svg class="tr"><use href="#tri"/></svg><span>尺寸标注</span></button><button class="ti"><svg class="tr"><use href="#tri"/></svg><span>符号标注</span></button><button class="ti"><svg class="tr"><use href="#tri"/></svg><span>图层控制</span></button><button class="ti"><svg class="tr"><use href="#tri"/></svg><span>工 具</span></button><button class="ti"><svg class="tr"><use href="#tri"/></svg><span>三维建模</span></button><button class="ti"><svg class="tr"><use href="#tri"/></svg><span>图块图案</span></button><button class="ti"><svg class="tr"><use href="#tri"/></svg><span>文件布图</span></button><button class="ti"><svg class="tr"><use href="#tri"/></svg><span>其 它</span></button><button class="ti"><svg class="tr"><use href="#tri"/></svg><span>帮助演示</span></button></div>
  </aside>

  <div class="dock left">
    <div class="vbar v20"><button class="vb" aria-label="直线"><svg class="ic"><use href="#line"/></svg></button><button class="vb" aria-label="构造线"><svg class="ic"><use href="#xline"/></svg></button><button class="vb" aria-label="多段线"><svg class="ic"><use href="#pline"/></svg></button><button class="vb" aria-label="多边形"><svg class="ic"><use href="#poly"/></svg></button><button class="vb" aria-label="矩形"><svg class="ic"><use href="#rect"/></svg></button><button class="vb" aria-label="圆弧"><svg class="ic"><use href="#arc"/></svg></button><button class="vb" aria-label="圆"><svg class="ic"><use href="#circle"/></svg></button><button class="vb" aria-label="修订云线"><svg class="ic"><use href="#revcloud"/></svg></button><button class="vb" aria-label="样条曲线"><svg class="ic"><use href="#spline"/></svg></button><button class="vb" aria-label="椭圆"><svg class="ic"><use href="#ellipse"/></svg></button><button class="vb" aria-label="椭圆弧"><svg class="ic"><use href="#earc"/></svg></button><button class="vb" aria-label="插入块"><svg class="ic"><use href="#insert"/></svg></button><button class="vb" aria-label="创建块"><svg class="ic"><use href="#mkblock"/></svg></button><button class="vb" aria-label="点"><svg class="ic"><use href="#point"/></svg></button><button class="vb" aria-label="图案填充"><svg class="ic"><use href="#hatch"/></svg></button><button class="vb" aria-label="渐变色"><svg class="ic"><use href="#grad"/></svg></button><button class="vb" aria-label="面域"><svg class="ic"><use href="#region"/></svg></button><button class="vb" aria-label="表格"><svg class="ic"><use href="#table"/></svg></button><button class="vb mtext" aria-label="多行文字">A</button><button class="vb" aria-label="添加选定对象"><svg class="ic"><use href="#addsel"/></svg></button></div>
  </div>

  <section class="view">
    <div class="canvas">
      <svg class="drawing" role="img" aria-label="图形">
        <defs>
          <g id="stall"><path d="M721 166v5h-4q-20 5-27 17l31 18v5M722.500 166v5"/><path d="M745.500 189c1-8 10-13 20-14l8-1v-1h5l1-2h5v1h8v32h-13v-2l-5-1v-1l-10-1c-10-1-19-6-19-10zM774 174v28M778.500 172v32"/><path d="M765 188h.5M784 179h1"/></g>
          <g id="partition"><path d="M720.500 206v10h2v-10zM722 210.500h70M722 212h70"/></g>
        </defs>
        <g transform="translate(-90 -95)">
          <g class="wall"><path d="M439.500 154.500h364v293h-364z"/><path d="M450.500 165.500h342v271h-182v-246h-12v246h-148z"/></g>
          <path class="axis" d="M440 159.500h418M385 441.500h473M444.500 160v342M603.500 190v312M798.500 100v411"/>
          <g class="stalls"><use href="#stall"/><use href="#stall" y="45"/><use href="#stall" y="90"/><use href="#stall" y="134"/><use href="#stall" y="179"/><use href="#stall" y="224"/><use href="#partition"/><use href="#partition" y="45"/><use href="#partition" y="90"/><use href="#partition" y="134"/><use href="#partition" y="179"/></g>
          <path class="ucs" d="M102.500 469v32h32M99.500 498.500h6v5h-6zM103 458l4 4 4-4M107 462v4M137 492l9 8M146 492l-9 8M768 510.500h23"/>
          <circle class="ring" cx="917" cy="145" r="31.500"/>
          <path class="cube" d="M902 130h30v30h-30z"/>
          <g class="compass"><text x="917" y="117">北</text><text x="917" y="183">南</text><text x="884" y="150">西</text><text x="950" y="150">东</text></g>
          <text class="top" x="917" y="152">上</text>
          <rect class="wcs" x="902" y="197" width="30" height="10" rx="3"/><text class="wcst" x="904" y="205">WCS</text>
        </g>
      </svg>

      <form class="dialog">
        <h2 class="dt">门</h2>
        <div class="db2">
          <svg class="shot" viewBox="0 0 70 56"><path fill="#000" d="M0 0h68v54H0z"/><path fill="none" stroke="#bbb" d="M4 28.500h12v9H4M64 28.500H52v9h12M17 18q13 0 17 15M51 18q-13 0-17 15"/><path fill="none" stroke="#b5b85c" d="M17.500 17v20M51.500 17v20M15.500 22h4v6h-4zM49.500 22h4v6h-4z"/></svg>
          <div class="f f1"><label for="no">编号</label><span class="combo"><select id="no"><option></option></select></span><label class="link" for="kind">类型</label><span class="combo grey"><select id="kind"><option>普通门</option></select></span><button class="lookup" type="button">查表</button></div>
          <div class="f f2"><label for="w"><span>门 宽</span></label><span class="combo"><select id="w"><option>900</option></select></span><label for="h"><span>门 高</span></label><span class="combo"><select id="h"><option>2100</option></select></span><label for="s"><span>门槛高</span></label><span class="combo"><select id="s"><option>0</option></select></span></div>
          <div class="f f2"><label class="off" for="dist">距 离</label><span class="combo off"><select id="dist" disabled><option>300</option></select></span><label class="link" for="cnt">个 数</label><span class="combo"><select id="cnt"><option>1</option></select></span></div>
          <svg class="shot wide" viewBox="0 0 75 56"><path fill="#000" d="M0 0h73v54H0z"/><path fill="none" stroke="#e39a86" d="M27.500 3.500h19v47h-19z"/><path fill="#fff" d="M28 30h2v3h-2z"/></svg>
        </div>
        <div class="dtools"><button type="button" class="tb on" aria-label="自由插入"><svg class="ic"><use href="#t1"/></svg></button><button type="button" class="tb" aria-label="沿墙顺序插入"><svg class="ic"><use href="#t2"/></svg></button><button type="button" class="tb" aria-label="轴线等分"><svg class="ic"><use href="#t3"/></svg></button><button type="button" class="tb" aria-label="墙段等分"><svg class="ic"><use href="#t4"/></svg></button><button type="button" class="tb" aria-label="垛宽定距"><svg class="ic"><use href="#t5"/></svg></button><button type="button" class="tb" aria-label="轴线定距"><svg class="ic"><use href="#t6"/></svg></button><button type="button" class="tb" aria-label="按角度"><svg class="ic"><use href="#t7"/></svg></button><button type="button" class="tb" aria-label="智能插入"><svg class="ic"><use href="#t8"/></svg></button><button type="button" class="tb" aria-label="满墙插入"><svg class="ic"><use href="#t9"/></svg></button><button type="button" class="tb" aria-label="上层门窗"><svg class="ic"><use href="#t10"/></svg></button><button type="button" class="tb" aria-label="自定义轮廓"><svg class="ic"><use href="#t11"/></svg></button><button type="button" class="tb" aria-label="替换"><svg class="ic"><use href="#t12"/></svg></button><button type="button" class="tb" aria-label="拾取参数"><svg class="ic"><use href="#t13"/></svg></button><i class="dsep"></i><button type="button" class="tb on" aria-label="插门"><svg class="ic"><use href="#t14"/></svg></button><button type="button" class="tb" aria-label="插窗"><svg class="ic"><use href="#t15"/></svg></button><button type="button" class="tb" aria-label="门连窗"><svg class="ic"><use href="#t16"/></svg></button><button type="button" class="tb" aria-label="子母门"><svg class="ic"><use href="#t17"/></svg></button><button type="button" class="tb" aria-label="弧窗"><svg class="ic"><use href="#t18"/></svg></button><button type="button" class="tb" aria-label="凸窗"><svg class="ic"><use href="#t19"/></svg></button><button type="button" class="tb" aria-label="矩形洞"><svg class="ic"><use href="#t20"/></svg></button><button type="button" class="tb" aria-label="标准构件库"><svg class="ic"><use href="#t21"/></svg></button></div>
      </form>
      <svg class="arrows" aria-hidden="true"><g transform="translate(-90 -95)"><path class="shaft" d="M168.500 275L144 166M296 316l5-105"/><path class="tip" d="M140 150l9 14-11 3zM302 197l4 16-10-1z"/></g></svg>
    </div>
    <div class="vscroll"><svg class="up" viewBox="0 0 8 8"><path d="M1 5.500l3-3 3 3"/></svg><i class="thumb"></i></div>
    <div class="layouts"><button class="lb" aria-label="第一个"><svg class="ic"><use href="#first"/></svg></button><button class="lb" aria-label="上一个"><svg class="ic"><use href="#prev"/></svg></button><button class="lb" aria-label="下一个"><svg class="ic"><use href="#next"/></svg></button><button class="lb" aria-label="最后一个"><svg class="ic"><use href="#last"/></svg></button><button class="lt model">模型</button><button class="lt">布局1</button><i class="slash"></i><button class="lt">布局2</button><i class="slash"></i><span class="hs"><svg class="ha" viewBox="0 0 8 8"><path d="M5.500 1l-3 3 3 3"/></svg></span></div>
  </section>

  <div class="dock right">
    <div class="vbar v18"><button class="vb" aria-label="删除"><svg class="ic"><use href="#erase"/></svg></button><button class="vb" aria-label="复制"><svg class="ic"><use href="#copyo"/></svg></button><button class="vb" aria-label="镜像"><svg class="ic"><use href="#mirror"/></svg></button><button class="vb" aria-label="偏移"><svg class="ic"><use href="#offset"/></svg></button><button class="vb" aria-label="阵列"><svg class="ic"><use href="#array"/></svg></button><button class="vb" aria-label="移动"><svg class="ic"><use href="#move"/></svg></button><button class="vb" aria-label="旋转"><svg class="ic"><use href="#rotate"/></svg></button><button class="vb" aria-label="缩放"><svg class="ic"><use href="#scale"/></svg></button><button class="vb" aria-label="拉伸"><svg class="ic"><use href="#stretch"/></svg></button><button class="vb" aria-label="修剪"><svg class="ic"><use href="#trim"/></svg></button><button class="vb" aria-label="延伸"><svg class="ic"><use href="#extend"/></svg></button><button class="vb" aria-label="打断于点"><svg class="ic"><use href="#brkpt"/></svg></button><button class="vb" aria-label="打断"><svg class="ic"><use href="#brk"/></svg></button><button class="vb" aria-label="合并"><svg class="ic"><use href="#join"/></svg></button><button class="vb" aria-label="倒角"><svg class="ic"><use href="#chamfer"/></svg></button><button class="vb" aria-label="圆角"><svg class="ic"><use href="#fillet"/></svg></button><button class="vb" aria-label="光顺曲线"><svg class="ic"><use href="#blend"/></svg></button><button class="vb" aria-label="分解"><svg class="ic"><use href="#explode"/></svg></button></div>
    <div class="vbar v6"><button class="vb" aria-label="前置"><svg class="ic"><use href="#front"/></svg></button><button class="vb" aria-label="后置"><svg class="ic"><use href="#back"/></svg></button><button class="vb" aria-label="置于之上"><svg class="ic"><use href="#above"/></svg></button><button class="vb" aria-label="置于之下"><svg class="ic"><use href="#under"/></svg></button><i class="hr"></i><button class="vb" aria-label="文字前置"><svg class="ic"><use href="#abc"/></svg></button><button class="vb" aria-label="填充后置"><svg class="ic"><use href="#hback"/></svg></button></div>
  </div>

  <section class="cmd">
    <div class="handle"><button class="hb" aria-label="关闭命令行"><svg class="ic"><use href="#x"/></svg></button><svg class="wrench" viewBox="0 0 12 8"><path d="M2 6h2M6 2q3 0 3 5"/></svg></div>
    <div class="lines"><p class="hist">命令: <span>TOpening</span></p><div class="entry"><svg class="ic"><use href="#prompt"/></svg><i class="dash"></i><label for="cli"><b>TOPENING</b> 点取门窗插入位置(<b>Shift</b>-左右开)&lt;退出&gt;:</label><input id="cli" type="text"></div></div>
  </section>
</main>

<footer class="status">
  <button class="scale">比例 1:100 <i class="down"></i></button>
  <output class="coord">84119, 8453, 0</output>
  <div class="modes"><button class="sb" aria-label="推断约束"><svg class="ic"><use href="#s1"/></svg></button><button class="sb" aria-label="捕捉"><svg class="ic"><use href="#s2"/></svg></button><button class="sb" aria-label="栅格"><svg class="ic"><use href="#s3"/></svg></button><button class="sb on" aria-label="正交"><svg class="ic"><use href="#s4"/></svg></button><button class="sb" aria-label="极轴"><svg class="ic"><use href="#s5"/></svg></button><button class="sb on" aria-label="对象捕捉"><svg class="ic"><use href="#s6"/></svg></button><button class="sb on" aria-label="三维捕捉"><svg class="ic"><use href="#s7"/></svg></button><button class="sb" aria-label="对象追踪"><svg class="ic"><use href="#s8"/></svg></button><button class="sb" aria-label="动态 UCS"><svg class="ic"><use href="#s9"/></svg></button><button class="sb" aria-label="动态输入"><svg class="ic"><use href="#s10"/></svg></button><button class="sb on" aria-label="线宽"><svg class="ic"><use href="#s11"/></svg></button><button class="sb on" aria-label="透明度"><svg class="ic"><use href="#s12"/></svg></button><button class="sb" aria-label="快捷特性"><svg class="ic"><use href="#s13"/></svg></button><button class="sb" aria-label="选择循环"><svg class="ic"><use href="#s14"/></svg></button><button class="sb" aria-label="注释监视器"><svg class="ic"><use href="#s15"/></svg></button></div>
  <div class="tray"><button class="sb word">模型</button><button class="sb" aria-label="快速查看布局"><svg class="ic"><use href="#lay1"/></svg></button><button class="sb" aria-label="快速查看图形"><svg class="ic"><use href="#lay2"/></svg></button><button class="sb ratio"><svg class="ic"><use href="#ann"/></svg>1:1 <i class="down"></i></button><button class="sb" aria-label="注释可见性"><svg class="ic"><use href="#ann"/></svg></button><button class="sb" aria-label="自动缩放"><svg class="ic"><use href="#ann"/></svg></button><button class="sb wsw" aria-label="切换工作空间"><svg class="ic"><use href="#gear"/></svg></button><button class="sb" aria-label="锁定"><svg class="ic"><use href="#lock"/></svg></button><button class="sb" aria-label="硬件加速"><svg class="ic"><use href="#ball"/></svg></button><button class="sb on" aria-label="隔离对象"><svg class="ic"><use href="#s11"/></svg></button></div>
</footer>

<div class="brand">
  <svg class="deer" viewBox="155 628 132 176"><path fill="#d6d8de" d="M165 649l14 5 8-4 8 11 15 10-4 6h-14c-8 14-14 30-2 41 22 5 52-3 72 10 11 8 11 18 10 27l-3 20 3 26h-10l-3-24-9-24c-20 6-40 4-58 3l-3 20-4 26h-10l3-27-3-27c-13-12-19-24-17-37 3-17 18-20 22-32-8-8-12-16-13-24z"/><path fill="none" stroke="#d6d8de" stroke-width="4" d="M190 656c20 6 72 10 95-19M198 656c-5-8-3-14 0-21M208 656c-4-10 3-14 5-25M221 658c-6-8 0-12 2-21M250 658c-3-9-9-12-12-18M262 655c-5-8-8-8-10-15"/></svg>
  <div class="bt"><div class="b1"><span>3D</span>溜溜网</div><div class="b2">3D66.COM</div></div>
</div>
</body>
</html>
```
FILE: styles.css
```css
* { box-sizing: border-box; }
body {
  margin: 0;
  min-height: 100vh;
  display: flex;
  flex-direction: column;
  position: relative;
  background: #666;
  color: #222;
  font: 10px/14px "Noto Sans", "Noto Sans CJK SC", sans-serif;
  overflow: hidden;
}
button, select, input { font: inherit; color: inherit; margin: 0; padding: 0; border: 0; background: none; }
select { appearance: none; opacity: 1; }
button { display: flex; align-items: center; justify-content: center; white-space: nowrap; }
h1, h2, p { margin: 0; font-weight: normal; }
.sprite { position: absolute; width: 0; height: 0; }
.ic { width: 12px; height: 12px; flex: none; fill: none; stroke: #555; stroke-width: 1.3; }
.dim { opacity: .5; }
.dot { width: 8px; display: flex; align-items: center; justify-content: center; flex: none; }
.dot::after { content: ""; width: 3px; height: 2px; background: #555; }
.down { border: 3px solid transparent; border-top: 4px solid #222; border-bottom: 0; flex: none; }

/* title and menu */
.head {
  display: grid;
  grid-template: 20px 16px / 26px minmax(0, 1fr);
  background: linear-gradient(#aaa 19px, #444 19px, #858585 20px, #555);
}
.logo { grid-row: 1 / 3; height: 27px; background: linear-gradient(#aaa, #777); border: 1px solid #444; border-width: 0 1px 1px 0; }
.logo-a { width: 26px; height: 26px; }
.title { display: flex; align-items: stretch; height: 19px; }
.quick { display: flex; padding: 0 3px; margin-left: 3px; border-left: 1px solid #666; background: linear-gradient(#b5b5b5, #999); }
.qb { width: 19px; flex: none; }
.quick .ic { width: 14px; height: 14px; }
.workspace { display: flex; align-items: center; width: 143px; padding: 0 3px 0 1px; background: #ccc; border: 1px solid #666; border-top: 0; }
.workspace .ic { width: 14px; height: 14px; }
.workspace .sel { flex: 1; min-width: 0; padding-left: 1px; }
.more { width: 14px; background: #999; border: 1px solid #777; }
.doc { flex: 164 1 0; background: #fff; color: #222; font-size: 10px; line-height: 16px; text-align: center; padding-left: 8px; }
.search { flex: 157 1 0; display: flex; min-width: 0; }
.side { width: 11px; background: #999; }
.side::after { content: ""; border: 3px solid transparent; border-left: 4px solid #111; border-right: 0; }
.query { flex: 1; min-width: 0; background: #eee; border: 1px solid #888; padding-left: 2px; font-size: 9px; font-style: italic; }
.query::placeholder { color: #777; opacity: 1; }
.account { display: flex; flex: 105 1 0; }
.account .ic { width: 14px; height: 14px; }
.login { width: auto; gap: 4px; padding-left: 3px; color: #eee; }
.services { display: flex; }
.services .qb { width: 20px; }
.services .ic { width: 13px; height: 13px; }
.services .helpb { width: 31px; }
.helpb .ic { width: 15px; height: 15px; }
.win { display: flex; background: #fff; padding: 0 0 4px 20px; }
.wb { width: 37px; }
.win .ic { width: 11px; height: 11px; stroke: #888; }
.menu { display: flex; align-items: center; gap: 17px; padding-left: 11px; color: #e8e8e8; }
.mdi { display: flex; margin-left: auto; }
.db { width: 11px; }
.db .ic { width: 9px; height: 9px; stroke: #111; stroke-width: 2; }

/* open files */
.files { display: flex; align-items: flex-end; height: 23px; padding-left: 12px; background: linear-gradient(#8b8b8b, #a5a5a5); border-bottom: 1px solid #777; }
.file { display: flex; align-items: center; justify-content: space-between; width: 110px; height: 18px; padding: 0 15px 0 13px; background: linear-gradient(#ccc, #b3b3b3); clip-path: polygon(0 100%, 5px 85%, 10px 10%, 13px 0, 97px 0, 101px 10%, 107px 85%, 100% 100%); }
.close .ic { width: 8px; height: 8px; stroke: #777; stroke-width: 2; }
.add { height: 18px; }
.plus { width: 19px; height: 13px; }

/* horizontal toolbars */
.bar { display: flex; gap: 6px; height: 18px; padding: 2px 5px 1px; }
.grp { display: flex; align-items: center; background: #ececec; border: solid #d5d5d5; border-width: 1px 0; }
.grp + .grp { box-shadow: -3px 0 #444; }
.tb { width: 15px; height: 13px; flex: none; }
.sep { width: 4px; height: 12px; flex: none; border-right: 1px solid #aaa; }
.drop { position: relative; display: flex; align-items: center; height: 13px; background: #cacaca; color: #777; }
.drop .sel { flex: 1; min-width: 0; height: 13px; line-height: 13px; padding-left: 12px; }
.drop::after, .combo::after { content: ""; position: absolute; right: 6px; top: 50%; width: 4px; height: 4px; margin-top: -3px; border: solid #aaa; border-width: 0 1px 1px 0; transform: rotate(45deg); }
.styles .drop { width: 77px; }
.ws .drop { width: 112px; }
.ws .sel { padding-left: 6px; }
.layer .drop { width: 192px; padding-left: 2px; }
.layer .sel { padding-left: 3px; }
.ls { width: 10px; height: 10px; margin-right: 1px; fill: none; stroke: #555; flex: none; }
.by .drop { font-family: "Liberation Mono", monospace; font-size: 9px; }
.by .sel { padding-left: 3px; }
.color { width: 98px; padding-left: 2px; }
.ltype { width: 103px; }
.lweight { width: 80px; }
.plot { width: 76px; }
.plot .sel { padding-left: 6px; }
.rule { height: 1px; background: #555; margin-left: 4px; flex: none; width: 38px; }
.lweight .rule { width: 23px; }

/* workspace */
.work { flex: 1; display: grid; grid-template: minmax(0, 1fr) 37px / 70px 20px minmax(0, 1fr) 19px; }
.tarch { grid-row: 1 / 3; background: #f0f0f0; border: solid #777; border-width: 0 1px 1px 0; overflow: hidden; font-family: "Liberation Sans", "Noto Sans CJK SC", sans-serif; }
.th { height: 18px; margin-bottom: 5px; padding: 2px 0 0 7px; background: linear-gradient(#bbb, #999); border-top: 2px solid #666; font-size: 10px; }
.tg { display: flex; flex-direction: column; border-top: 1px solid #bbb; padding: 1px 0; }
.g4 { height: 48px; border-top: 0; padding: 0; }
.g5 { height: 62px; }
.g4 + .g5 { border-color: #555; }
.g14 { height: 165px; border-top: 0; }
.ti { flex: 1; min-height: 0; justify-content: flex-start; line-height: 11px; }
.ti span { width: 39px; text-align-last: justify; }
.three span { width: 35px; }
.ti .ic { height: 11px; margin: 0 3px 0 0; }
.tr { width: 5px; height: 6px; margin: 0 6px 0 4px; }

.dock { display: flex; flex-direction: column; align-items: center; gap: 7px; padding-top: 7px; }
.right { padding-left: 2px; }
.vbar { display: flex; flex-direction: column; width: 16px; background: #f0f0f0; }
.v20 { height: 284px; }
.v18 { height: 256px; }
.v6 { height: 90px; }
.vb { flex: 1; min-height: 0; }
.hr { height: 4px; border-top: 1px solid #bbb; }
.mtext { font: 13px/13px "Liberation Sans", sans-serif; }

.view { display: grid; grid-template: minmax(0, 1fr) 15px / minmax(0, 1fr) 14px; background: #000; }
.canvas { position: relative; overflow: hidden; }
.drawing, .arrows { position: absolute; inset: 0; width: 100%; height: 100%; pointer-events: none; }
.wall { fill: none; stroke: #b9b9b9; stroke-width: 3; }
.axis { fill: none; stroke: #b02020; }
.stalls { fill: none; stroke: #8e2e91; }
.ucs { fill: none; stroke: #aaa; }
.ring { fill: none; stroke: #333; stroke-width: 7; }
.cube { fill: #a5a5a5; }
.compass { fill: #aaa; font: 12px "Noto Sans CJK SC", sans-serif; text-anchor: middle; }
.top { fill: #555; font: 19px "Noto Sans CJK SC", sans-serif; text-anchor: middle; }
.wcs { fill: #9a9aa0; }
.wcst { fill: #555; font-size: 8px; }
.shaft { stroke: #e40f0f; stroke-width: 2; }
.tip { fill: #f01010; }
.vscroll { display: flex; flex-direction: column; justify-content: space-between; align-items: center; background: #eee; padding-top: 4px; }
.up, .ha { width: 8px; height: 8px; fill: none; stroke: #333; stroke-width: 1.5; }
.thumb { width: 12px; height: 36px; background: #c5c5c5; }
.layouts { grid-column: 1 / 3; display: flex; align-items: center; background: #eee; }
.lb { width: 12px; height: 14px; border-right: 1px solid #ccc; }
.lb .ic { width: 9px; height: 9px; }
.lt { padding: 0 3px; height: 15px; }
.model { padding: 0 10px; background: #000; color: #fff; clip-path: polygon(0 0, 100% 0, 34px 100%, 6px 100%); }
.slash { width: 1px; height: 12px; background: #444; transform: skewX(-25deg); margin: 0 3px; }
.hs { flex: none; width: 311px; margin-left: auto; border-left: 4px solid #bbb; padding-left: 3px; display: flex; }

/* door dialog */
.dialog { position: absolute; left: 0; top: 1px; width: 476px; background: #f0f0f0; font: 10px/14px "Noto Sans CJK SC", sans-serif; }
.dt { height: 19px; padding: 2px 2px; background: #fff; color: #999; font-size: 10px; }
.db2 { display: flex; align-items: flex-start; padding: 6px 0 9px 11px; }
.shot { width: 70px; height: 56px; border: solid #888; border-width: 0 1px 1px 0; margin-right: 7px; }
.wide { width: 75px; margin: 0 0 0 9px; }
.f { display: grid; row-gap: 5px; align-items: center; }
.f1 { grid-template-columns: 24px 81px; margin-right: 8px; }
.f2 { grid-template-columns: 36px 49px; margin-right: 8px; }
.f2 label { width: 28px; text-align-last: justify; }
.f2 label span { display: block; white-space: nowrap; margin-right: -2px; }
.f2 + .f2 { grid-template-columns: 35px 49px; margin-right: 0; }
.link { color: #2488b5; }
.off { color: #aaa; }
.combo { position: relative; display: block; height: 15px; background: #fff; border: 1px solid #888; }
.combo select { width: 100%; height: 13px; line-height: 13px; padding-left: 2px; display: block; }
.combo::after { border-color: #444; right: 5px; }
.combo.grey { background: #ddd; }
.combo.off { border-color: #ccc; background: #eee; }
.combo.off::after { border-color: #aaa; }
.lookup { grid-column: 1 / 3; width: 43px; height: 15px; background: #e1e1e1; border: 1px solid #aaa; }
.dtools { display: flex; align-items: center; height: 17px; background: #f8f8f8; border-top: 1px solid #ccc; }
.dtools .tb { height: 15px; }
.dtools .ic { width: 12px; height: 11px; }
.dtools .on { background: #bde0ec; }
.dsep { width: 3px; height: 12px; margin: 0 4px 0 2px; border: solid #999; border-width: 0 1px; }

/* command line */
.cmd { grid-column: 2 / 5; display: flex; border-top: 3px solid #666; }
.handle { width: 17px; margin-left: 3px; background: #555; display: flex; flex-direction: column; align-items: center; justify-content: space-between; padding-top: 12px; }
.hb .ic { width: 10px; height: 10px; stroke: #fff; stroke-width: 3; }
.wrench { width: 12px; height: 8px; fill: none; stroke: #ddd; stroke-width: 2; }
.lines { flex: 1; display: flex; flex-direction: column; font: 12px/16px "DejaVu Sans Mono", "Noto Sans CJK SC", monospace; }
.hist { height: 17px; padding-left: 2px; background: #c6c6c6; border-bottom: 1px solid #888; }
.entry { flex: 1; display: flex; align-items: center; background: #fff; padding-left: 3px; color: #111; }
.dash { width: 4px; height: 2px; margin: 0 6px 0 4px; background: #888; }
.entry input { flex: 1; min-width: 0; }

/* status bar */
.status { display: flex; height: 12px; background: linear-gradient(#777, #999); border-top: 1px solid #444; overflow: hidden; align-items: flex-start; font: 9px/14px "Liberation Mono", "Noto Sans CJK SC", monospace; color: #111; }
.scale { width: 70px; justify-content: flex-start; padding-left: 3px; gap: 4px; }
.coord { width: 100px; padding-left: 1px; }
.modes, .tray { display: flex; }
.sb { width: 14px; height: 14px; flex: none; background: #b5b5b5; border-left: 1px solid #888; }
.status .on { background: #bfe0ec; }
.sb .ic { width: 11px; height: 11px; stroke: #333; }
.tray { margin-left: auto; padding-right: 192px; }
.tray .word { width: 24px; }
.tray .wsw { margin-left: 5px; }
.tray .ratio { width: 42px; margin-left: 12px; gap: 2px; }

/* site mark */
.brand { position: absolute; right: 0; bottom: 0; display: flex; align-items: center; gap: 8px; width: 200px; height: 95px; padding-left: 12px; background: #23315a; color: #d6d8de; }
.deer { width: 44px; height: 59px; flex: none; }
.bt { white-space: nowrap; padding-top: 4px; }
.b1 { display: flex; align-items: center; font: bold 28px/32px "Noto Sans CJK SC", sans-serif; }
.b1 span { font: 500 34px/32px Roboto, sans-serif; }
.b2 { font: 24px/24px Inter, sans-serif; }
```
